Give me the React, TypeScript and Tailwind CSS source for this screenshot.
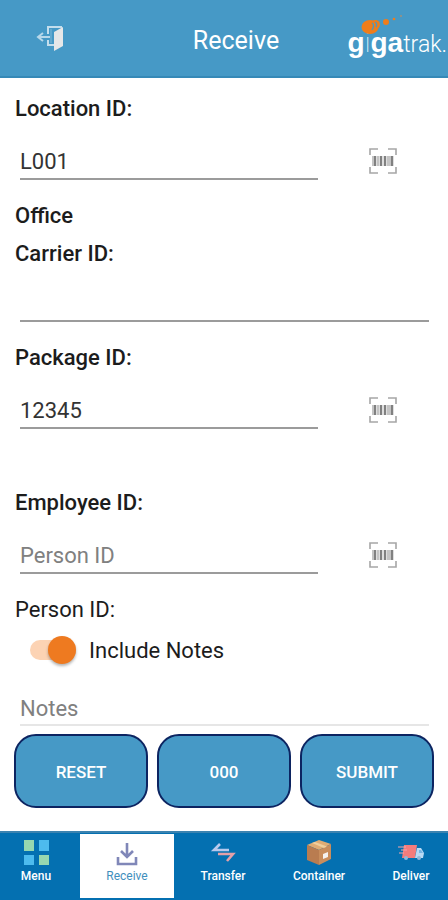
import { useState } from "react";

const NAV_ITEMS = [
  { label: "Menu", icon: <MenuIcon /> },
  { label: "Receive", icon: <ReceiveIcon /> },
  { label: "Transfer", icon: <TransferIcon /> },
  { label: "Container", icon: <ContainerIcon /> },
  { label: "Deliver", icon: <DeliverIcon /> },
];

export default function App() {
  const [active, setActive] = useState("Receive");
  const [includeNotes, setIncludeNotes] = useState(true);

  return (
    <div className="flex min-h-screen flex-col bg-white font-['Roboto',sans-serif] text-[#1c1c1c]">
      <Header />

      <form className="flex flex-1 flex-col" onSubmit={(e) => e.preventDefault()}>
        <div className="pt-[17px] pl-[15px]">
          <ScanField id="location" label="Location ID:" defaultValue="L001" />
          <p className="mt-[22px] text-[22px] leading-7 font-medium">Office</p>

          <div className="mt-[10px] flex flex-col">
            <label htmlFor="carrier" className="text-[22px] leading-7 font-medium">
              Carrier ID:
            </label>
            <input
              id="carrier"
              className="mt-4 mr-[19px] ml-[5px] h-[38px] border-b-2 border-[#9b9b9b] pt-[2px] text-[22px] outline-none"
            />
          </div>

          <div className="mt-[22px]">
            <ScanField id="package" label="Package ID:" defaultValue="12345" />
          </div>
          <div className="mt-[60px]">
            <ScanField id="employee" label="Employee ID:" placeholder="Person ID" />
          </div>
          <p className="mt-[22px] text-[22px] leading-7">Person ID:</p>

          <label className="mt-3 ml-[15px] flex h-7 items-center text-[22px]">
            <input
              type="checkbox"
              role="switch"
              className="peer sr-only"
              checked={includeNotes}
              onChange={(e) => setIncludeNotes(e.target.checked)}
            />
            <span className="mr-[13px] flex h-5 w-[46px] items-center rounded-full bg-gray-300 peer-checked:justify-end peer-checked:bg-[#fcd3b4]">
              <span className="size-7 shrink-0 rounded-full bg-[#ee7a20] shadow-[0_2px_3px_rgba(0,0,0,0.3)]" />
            </span>
            Include Notes
          </label>

          <input
            aria-label="Notes"
            placeholder="Notes"
            className="mt-6 ml-[5px] block h-[38px] w-[calc(100%-24px)] border-b-2 border-[#e6e6e6] pt-1 text-[22px] outline-none placeholder:text-[#808080]"
          />
        </div>

        <div className="mt-2 grid grid-cols-3 gap-[9px] px-[14px]">
          <ActionButton type="reset">RESET</ActionButton>
          <ActionButton>000</ActionButton>
          <ActionButton type="submit">SUBMIT</ActionButton>
        </div>
      </form>

      <nav className="grid h-[69px] grid-cols-[80fr_94fr_98fr_94fr_82fr] border-t-2 border-[#3c83b0] bg-[#0470b1]">
        {NAV_ITEMS.map(({ label, icon }) => (
          <button
            key={label}
            type="button"
            onClick={() => setActive(label)}
            className={
              label === active
                ? "mt-px mb-[2px] flex flex-col items-center bg-white pt-[5px] text-[12px] leading-4 text-[#3f8fbd]"
                : "flex flex-col items-center pt-[6px] text-[12px] leading-4 font-medium text-white first:pr-2 last:pl-2"
            }
          >
            {icon}
            <span className="mt-px">{label}</span>
          </button>
        ))}
      </nav>
    </div>
  );
}

function Header() {
  return (
    <header className="grid h-[78px] grid-cols-[1fr_auto_1fr] items-center border-b-2 border-[#3689b7] bg-[#4699c6] text-white">
      <button type="button" aria-label="Exit" className="ml-9 w-7">
        <ExitIcon />
      </button>
      <h1 className="pt-[6px] pl-6 text-[25px] leading-8">Receive</h1>
      <div className="justify-self-end">
        <Logo />
      </div>
    </header>
  );
}

function Logo() {
  return (
    <div className="relative flex items-baseline pt-3 pr-px leading-8">
      <svg viewBox="0 0 44 22" className="absolute -top-px left-[13px] w-11" aria-hidden="true">
        <ellipse cx="9" cy="13" rx="8.500" ry="7" fill="#f07d1a" />
        <circle cx="14.500" cy="10.500" r="4.500" fill="#f07d1a" />
        <path d="M11 9c2 1 2 4 0 7M14 8c2 1 2 3 1 5" fill="none" stroke="#4699c6" strokeWidth="1.300" />
        <circle cx="25" cy="8" r="3" fill="#f07d1a" />
        <circle cx="33" cy="5" r="1.300" fill="#f07d1a" />
        <circle cx="40" cy="2" r="0.800" fill="#e08a45" />
      </svg>
      <span className="font-['Liberation_Sans',sans-serif] text-[28px] font-bold">g</span>
      <span className="text-[28px] font-thin">i</span>
      <span className="font-['Liberation_Sans',sans-serif] text-[28px] font-bold">ga</span>
      <span className="text-[23px] font-light">trak.</span>
    </div>
  );
}

type ScanFieldProps = {
  id: string;
  label: string;
  defaultValue?: string;
  placeholder?: string;
};

function ScanField({ id, label, defaultValue, placeholder }: ScanFieldProps) {
  return (
    <div>
      <label htmlFor={id} className="block text-[22px] leading-7 font-medium">
        {label}
      </label>
      <div className="mt-[19px] flex items-center pl-[5px]">
        <input
          id={id}
          defaultValue={defaultValue}
          placeholder={placeholder}
          className="h-[38px] min-w-0 flex-1 border-b-2 border-[#9b9b9b] pt-[2px] text-[22px] text-[#333] outline-none placeholder:text-[#808080]"
        />
        <div className="flex w-[130px] shrink-0 justify-center">
          <button type="button" aria-label={`Scan ${label}`}>
            <BarcodeIcon />
          </button>
        </div>
      </div>
    </div>
  );
}

function ActionButton({
  type = "button",
  children,
}: {
  type?: "button" | "submit" | "reset";
  children: string;
}) {
  return (
    <button
      type={type}
      className="h-[74px] rounded-[22px] border-2 border-[#0c2461] bg-[#4699c6] pt-1 text-[17px] font-medium text-white"
    >
      {children}
    </button>
  );
}

function ExitIcon() {
  return (
    <svg viewBox="0 0 28 28" className="w-7" aria-hidden="true">
      <path d="M12 10V3h14M12 16v5h7" fill="none" stroke="#c3deed" strokeWidth="2" />
      <path d="M15 5v14" stroke="#7fb8d8" strokeWidth="1" />
      <path d="M18 8l9-5v19l-9 5z" fill="#e6e7e8" />
      <path d="M14 13H3m4-4l-5 4 5 4" fill="none" stroke="#b7d8ea" strokeWidth="2" />
    </svg>
  );
}

function BarcodeIcon() {
  return (
    <svg viewBox="0 0 28 28" className="w-7" aria-hidden="true">
      <path
        d="M1 8V2h8M19 2h8v6M1 20v6h8M19 26h8v-6"
        fill="none"
        stroke="#a6a6a6"
        strokeWidth="1.6"
      />
      <path d="M3 9h22v10H3z" fill="#dedede" />
      <path d="M6 9v10M12 9v10M16 9v10M23 9v10" stroke="#777" strokeWidth="1.8" />
      <path d="M4 9v10M9 9v10M19 9v10M21 9v10" stroke="#aaa" strokeWidth="1" />
    </svg>
  );
}

function MenuIcon() {
  return (
    <svg viewBox="0 0 28 28" className="size-7" aria-hidden="true">
      <path d="M2 1h10v11H2zM17 16h10v10H17z" fill="#96d7b0" />
      <path d="M17 1h10v11H17zM2 16h10v10H2z" fill="#4dbbee" />
    </svg>
  );
}

function ReceiveIcon() {
  return (
    <svg viewBox="0 0 28 28" className="size-7" aria-hidden="true">
      <g fill="none" stroke="#8087b8" strokeWidth="2.6">
        <path d="M14 4v14M8 12l6 6 6-6" />
        <path d="M5 18v7h18v-7" />
      </g>
    </svg>
  );
}

function TransferIcon() {
  return (
    <svg viewBox="0 0 28 28" className="size-7" aria-hidden="true">
      <path d="M11 5l-6 6h15" fill="none" stroke="#b9c9ed" strokeWidth="2.6" />
      <path d="M9 15h15l-6 7" fill="none" stroke="#e5a0a8" strokeWidth="2.6" />
    </svg>
  );
}

function ContainerIcon() {
  return (
    <svg viewBox="0 0 28 28" className="size-7" aria-hidden="true">
      <path d="M2 6l12-5 12 4-12 6z" fill="#dfac74" />
      <path d="M2 6l12 5v15L2 21z" fill="#b97c50" />
      <path d="M14 11l12-6v15l-12 6z" fill="#c98d5c" />
      <path d="M7 4l12 5 3-1.500L10 3z" fill="#f0cf9c" />
      <path d="M18 15l5-2v5l-5 2z" fill="#f5f2f0" />
    </svg>
  );
}

function DeliverIcon() {
  return (
    <svg viewBox="0 0 28 28" className="size-7" aria-hidden="true">
      <path d="M7 6h13l-2 13H5z" fill="#f47c7c" />
      <path d="M20 9h4l3 5-1 5h-8z" fill="#b9daf5" />
      <path d="M22 11h2l2 3h-4z" fill="#79b5e3" />
      <path d="M1 8h8M4 11h6M2 14h5" stroke="#f4a6aa" strokeWidth="1.2" />
      <circle cx="9" cy="19" r="2" fill="#8fb8da" />
      <circle cx="22" cy="19" r="2" fill="#8fb8da" />
    </svg>
  );
}
